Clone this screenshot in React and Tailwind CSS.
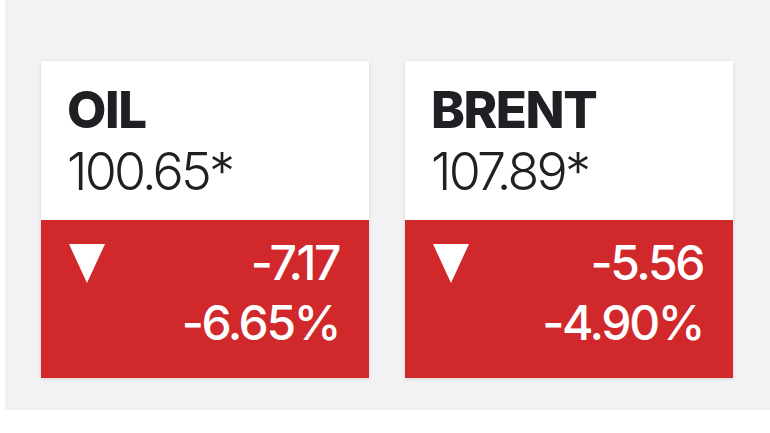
import React from "react";

function Card({ name, price, change, pct }) {
  return (
    <div className="w-[328px] shrink-0 shadow-[0_1px_4px_rgba(0,0,0,0.12)]">
      <div className="h-[159px] bg-white pl-[26px] pt-[18px] text-[#1e2024]">
        <div className="text-[51px] font-extrabold leading-[62px] tracking-[-1.4px]">{name}</div>
        <div className="text-[52px] font-light leading-[62px] tracking-[-2.8px]">{price}</div>
      </div>
      <div className="relative h-[158px] bg-[#d0282b] pr-[30px] pt-[13px] text-white">
        <svg className="absolute left-[28px] top-[24px]" width="36" height="39" viewBox="0 0 36 39">
          <polygon points="0,0 36,0 18,39" fill="#ffffff" />
        </svg>
        <div className="text-right text-[48px] font-medium leading-[60px] tracking-[-2.4px]">{change}</div>
        <div className="text-right text-[48px] font-medium leading-[60px] tracking-[-2.4px]">{pct}</div>
      </div>
    </div>
  );
}

export default function App() {
  return (
    <div className="w-[770px] h-[433px] bg-white overflow-hidden" style={{ fontFamily: "Inter, 'Liberation Sans', sans-serif" }}>
      <div className="ml-[5px] h-[410px] bg-[#f2f2f5] flex items-start gap-[36px] pl-[36px] pt-[61px]">
        <Card name="OIL" price="100.65*" change="-7.17" pct="-6.65%" />
        <Card name="BRENT" price="107.89*" change="-5.56" pct="-4.90%" />
        <div className="ml-auto mr-[1px] w-px self-stretch bg-[#e7e7eb]" />
      </div>
    </div>
  );
}
